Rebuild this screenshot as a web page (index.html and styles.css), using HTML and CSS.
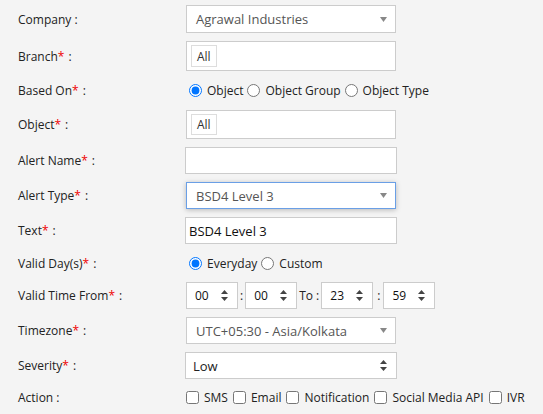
FILE: index.html
```html
<!DOCTYPE html>
<html lang="en">
<head>
  <meta charset="UTF-8">
  <title>Alert Configuration</title>
  <link rel="stylesheet" href="styles.css">
</head>
<body>
  <form class="alert-form">
    <div class="row h28">
      <label class="lbl">Company :</label>
      <div class="sel"><span>Agrawal Industries</span>
        <svg class="caret" width="7" height="5" viewBox="0 0 7 5"><path d="M0 0h7L3.5 5z"/></svg>
      </div>
    </div>

    <div class="row h30">
      <label class="lbl">Branch<em>*</em> :</label>
      <div class="tagbox"><span class="tag">All</span></div>
    </div>

    <div class="row h23">
      <label class="lbl">Based On<em>*</em> :</label>
      <div class="choices">
        <label><input type="radio" name="based" checked> Object</label>
        <label><input type="radio" name="based"> Object Group</label>
        <label><input type="radio" name="based"> Object Type</label>
      </div>
    </div>

    <div class="row h29">
      <label class="lbl">Object<em>*</em> :</label>
      <div class="tagbox"><span class="tag">All</span></div>
    </div>

    <div class="row h27">
      <label class="lbl">Alert Name<em>*</em> :</label>
      <input class="txt" type="text">
    </div>

    <div class="row h27">
      <label class="lbl">Alert Type<em>*</em> :</label>
      <div class="sel focus"><span>BSD4 Level 3</span>
        <svg class="caret" width="7" height="5" viewBox="0 0 7 5"><path d="M0 0h7L3.5 5z"/></svg>
      </div>
    </div>

    <div class="row h27">
      <label class="lbl">Text<em>*</em> :</label>
      <input class="txt" type="text" value="BSD4 Level 3">
    </div>

    <div class="row h22">
      <label class="lbl">Valid Day(s)<em>*</em> :</label>
      <div class="choices">
        <label><input type="radio" name="days" checked> Everyday</label>
        <label><input type="radio" name="days"> Custom</label>
      </div>
    </div>

    <div class="row h27">
      <label class="lbl">Valid Time From<em>*</em> :</label>
      <div class="times">
        <div class="spin"><span>00</span><svg class="updown" width="7" height="11" viewBox="0 0 7 11"><path d="M3.5 0L7 4H0zM0 7h7l-3.5 4z"/></svg></div>
        <span class="sep">:</span>
        <div class="spin"><span>00</span><svg class="updown" width="7" height="11" viewBox="0 0 7 11"><path d="M3.5 0L7 4H0zM0 7h7l-3.5 4z"/></svg></div>
        <span class="sep">To :</span>
        <div class="spin"><span>23</span><svg class="updown" width="7" height="11" viewBox="0 0 7 11"><path d="M3.5 0L7 4H0zM0 7h7l-3.5 4z"/></svg></div>
        <span class="sep wide">:</span>
        <div class="spin"><span>59</span><svg class="updown" width="7" height="11" viewBox="0 0 7 11"><path d="M3.5 0L7 4H0zM0 7h7l-3.5 4z"/></svg></div>
      </div>
    </div>

    <div class="row h27">
      <label class="lbl">Timezone<em>*</em> :</label>
      <div class="sel"><span>UTC+05:30 - Asia/Kolkata</span>
        <svg class="caret" width="7" height="5" viewBox="0 0 7 5"><path d="M0 0h7L3.5 5z"/></svg>
      </div>
    </div>

    <div class="row h27">
      <label class="lbl">Severity<em>*</em> :</label>
      <div class="sel native"><span>Low</span>
        <svg class="updown" width="7" height="11" viewBox="0 0 7 11"><path d="M3.5 0L7 4H0zM0 7h7l-3.5 4z"/></svg>
      </div>
    </div>

    <div class="row h20">
      <label class="lbl">Action :</label>
      <div class="choices checks">
        <label><input type="checkbox"> SMS</label>
        <label><input type="checkbox"> Email</label>
        <label><input type="checkbox"> Notification</label>
        <label><input type="checkbox"> Social Media API</label>
        <label><input type="checkbox"> IVR</label>
      </div>
    </div>
  </form>
</body>
</html>
```

FILE: styles.css
```css
body {
  margin: 0;
  padding: 5px 0 0 18px;
  background-color: #f4f4f4;
  font-family: "Open Sans", Arial, sans-serif;
  font-size: 12px;
  color: #222;
}
.alert-form {
  display: flex;
  flex-direction: column;
  gap: 8px;
}
.row {
  display: grid;
  grid-template-columns: 168px auto;
  align-items: center;
}
.h20 { height: 20px; }
.h22 { height: 22px; }
.h23 { height: 23px; }
.h27 { height: 27px; }
.h28 { height: 28px; }
.h29 { height: 29px; }
.h30 { height: 30px; }
.row > * { align-self: stretch; }
.row > .choices { align-self: center; }
.lbl {
  display: flex;
  align-items: center;
}
.lbl em {
  font-style: normal;
  color: #e00;
  margin-right: 4px;
}
.sel, .tagbox, .txt {
  box-sizing: border-box;
  width: 210px;
  background: #fff;
  border: 1px solid #ccc;
}
.sel {
  display: flex;
  align-items: center;
  justify-content: space-between;
  padding: 0 8px 0 9px;
  font-size: 13px;
  color: #555;
}
.sel.focus {
  border-color: #6a9fe6;
  box-shadow: 0 1px 5px rgba(0, 0, 0, 0.25);
}
.sel.native {
  width: 212px;
  margin-left: -1px;
  padding: 0 9px 0 7px;
  color: #222;
}
.caret { fill: #888; }
.updown { fill: #444; }
.tagbox {
  padding: 3px 4px;
}
.tag {
  display: inline-flex;
  align-items: center;
  height: 100%;
  box-sizing: border-box;
  padding: 0 5px;
  border: 1px solid #ddd;
  font-size: 12px;
  color: #333;
}
.txt {
  width: 212px;
  margin-left: -1px;
  padding: 0 3px;
  font-family: inherit;
  font-size: 13px;
  color: #111;
  outline: none;
}
.choices {
  display: flex;
  align-items: center;
  gap: 4px;
  margin-left: 3px;
}
.choices label {
  display: flex;
  align-items: center;
  gap: 5px;
}
.choices input {
  margin: 0;
  width: 13px;
  height: 13px;
}
.checks { margin-left: 0; gap: 5px; }
.times {
  display: flex;
  align-items: stretch;
}
.spin {
  box-sizing: border-box;
  width: 52px;
  display: flex;
  align-items: center;
  justify-content: space-between;
  padding: 0 9px 0 8px;
  background: #fff;
  border: 1px solid #ccc;
  font-size: 12px;
  color: #111;
}
.sep {
  display: flex;
  align-items: center;
  padding: 0 2px;
}
.sep.wide { padding: 0 3px 0 4px; }
```
